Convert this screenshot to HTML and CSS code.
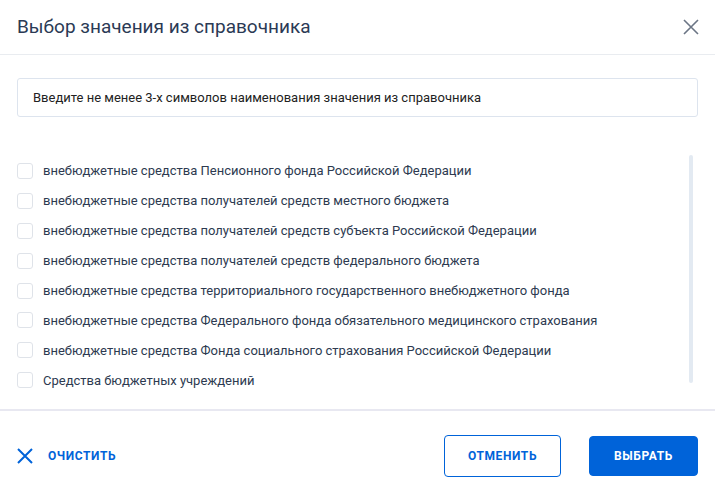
FILE: index.html
```html
<!DOCTYPE html>
<html lang="ru">
<head>
  <meta charset="UTF-8" />
  <meta name="viewport" content="width=device-width, initial-scale=1.0" />
  <title>Выбор значения из справочника</title>
  <link rel="stylesheet" href="styles.css">
</head>
<body>
  <div class="modal">
    <div class="modal-header">
      <div class="modal-title">Выбор значения из справочника</div>
      <button class="close-btn" aria-label="Закрыть">
        <svg width="16" height="16" viewBox="0 0 16 16">
          <path d="M1 1L15 15M15 1L1 15" stroke="#6b7585" stroke-width="1.6" fill="none" />
        </svg>
      </button>
    </div>

    <div class="modal-body">
      <div class="search-box">Введите не менее 3-х символов наименования значения из справочника</div>

      <div class="list">
        <label class="list-item"><span class="checkbox"></span>внебюджетные средства Пенсионного фонда Российской Федерации</label>
        <label class="list-item"><span class="checkbox"></span>внебюджетные средства получателей средств местного бюджета</label>
        <label class="list-item"><span class="checkbox"></span>внебюджетные средства получателей средств субъекта Российской Федерации</label>
        <label class="list-item"><span class="checkbox"></span>внебюджетные средства получателей средств федерального бюджета</label>
        <label class="list-item"><span class="checkbox"></span>внебюджетные средства территориального государственного внебюджетного фонда</label>
        <label class="list-item"><span class="checkbox"></span>внебюджетные средства Федерального фонда обязательного медицинского страхования</label>
        <label class="list-item"><span class="checkbox"></span>внебюджетные средства Фонда социального страхования Российской Федерации</label>
        <label class="list-item"><span class="checkbox"></span>Средства бюджетных учреждений</label>
        <div class="scroll-thumb"></div>
      </div>
    </div>

    <div class="modal-footer">
      <button class="clear-btn">
        <svg width="16" height="16" viewBox="0 0 16 16">
          <path d="M1 1L15 15M15 1L1 15" stroke="#0063d9" stroke-width="2" fill="none" />
        </svg>
        ОЧИСТИТЬ
      </button>
      <div class="actions">
        <button class="btn btn-outline">ОТМЕНИТЬ</button>
        <button class="btn btn-primary">ВЫБРАТЬ</button>
      </div>
    </div>
  </div>
</body>
</html>
```

FILE: styles.css
```css
html, body {
  margin: 0;
  padding: 0;
  background: #fff;
  font-family: Roboto, 'Liberation Sans', sans-serif;
}
.modal {
  width: 715px;
  height: 489px;
  display: flex;
  flex-direction: column;
  box-sizing: border-box;
}
.modal-header {
  height: 55px;
  flex: none;
  box-sizing: border-box;
  border-bottom: 1px solid #e9ecf0;
  display: flex;
  align-items: center;
  justify-content: space-between;
  padding: 0 16px 0 17px;
}
.modal-title {
  font-size: 19px;
  font-weight: 400;
  color: #2b3a55;
  margin-top: -1px;
}
.close-btn {
  border: none;
  background: none;
  padding: 0;
  width: 16px;
  height: 16px;
  cursor: pointer;
  display: flex;
}
.modal-body {
  padding: 23px 17px 0 17px;
  flex: 1;
  border-bottom: 2px solid #e8e8f1;
}
.search-box {
  height: 39px;
  box-sizing: border-box;
  border: 1px solid #dde4ee;
  border-radius: 3px;
  padding: 0 15px;
  display: flex;
  align-items: center;
  font-size: 13px;
  color: #222;
}
.list {
  position: relative;
  margin-top: 37px;
  padding-top: 2px;
}
.list-item {
  display: flex;
  align-items: center;
  height: 29.9px;
  font-size: 13px;
  color: #2d3a50;
  cursor: pointer;
}
.checkbox {
  width: 14px;
  height: 14px;
  border: 1px solid #dfe3e9;
  border-radius: 3px;
  margin-right: 10px;
  flex-shrink: 0;
}
.scroll-thumb {
  position: absolute;
  top: 1px;
  right: 5px;
  width: 4px;
  height: 228px;
  background: #e3eaf2;
  border-radius: 2px;
}
.modal-footer {
  height: 78px;
  flex: none;
  box-sizing: border-box;
  display: flex;
  align-items: center;
  justify-content: space-between;
  padding: 11px 17px 0 17px;
}
.clear-btn {
  border: none;
  background: none;
  padding: 0;
  display: flex;
  align-items: center;
  gap: 15px;
  font-family: inherit;
  font-size: 12px;
  font-weight: 700;
  letter-spacing: 0.6px;
  color: #0063d9;
  cursor: pointer;
}
.actions {
  display: flex;
  gap: 28px;
}
.btn {
  height: 42px;
  border-radius: 4px;
  font-family: inherit;
  font-size: 12px;
  font-weight: 700;
  letter-spacing: 0.6px;
  cursor: pointer;
}
.btn-outline {
  width: 117px;
  background: #fff;
  border: 1px solid #0063d9;
  color: #0063d9;
}
.btn-primary {
  width: 109px;
  height: 40px;
  margin-top: 1px;
  background: #0063d9;
  border: 1px solid #0063d9;
  color: #fff;
}
```
